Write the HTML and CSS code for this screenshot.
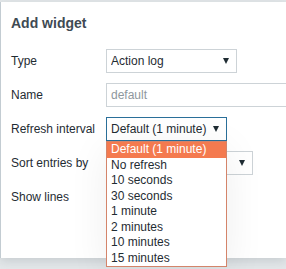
FILE: index.html
```html
<!DOCTYPE html>
<html>
<head>
<meta charset="utf-8">
<link rel="stylesheet" href="styles.css">
</head>
<body>
<div class="dialog">
  <h2 class="title">Add widget</h2>
  <div class="form">
    <div class="row">
      <span class="label">Type</span>
      <div class="select w-type"><span class="value">Action log</span><i class="arrow"></i></div>
    </div>
    <div class="row">
      <span class="label">Name</span>
      <div class="input w-name"><span class="placeholder">default</span></div>
    </div>
    <div class="row">
      <span class="label">Refresh interval</span>
      <div class="select focused w-refresh"><span class="value">Default (1 minute)</span><i class="arrow"></i>
        <ul class="list">
          <li class="opt active">Default (1 minute)</li>
          <li class="opt">No refresh</li>
          <li class="opt">10 seconds</li>
          <li class="opt">30 seconds</li>
          <li class="opt">1 minute</li>
          <li class="opt">2 minutes</li>
          <li class="opt">10 minutes</li>
          <li class="opt">15 minutes</li>
        </ul>
      </div>
    </div>
    <div class="row">
      <span class="label">Sort entries by</span>
      <div class="select w-sort"><span class="value"></span><i class="arrow"></i></div>
    </div>
    <div class="row">
      <span class="label">Show lines</span>
    </div>
  </div>
</div>
</body>
</html>
```
FILE: styles.css
```css
html, body {
  margin: 0;
  padding: 0;
}
body {
  width: 286px;
  height: 269px;
  overflow: hidden;
  background: #e4e8ea;
  font-family: "Liberation Sans", Arial, sans-serif;
  font-size: 12px;
  color: #1f2c33;
}
.dialog {
  margin-top: 2px;
  width: 286px;
  height: 256px;
  background: #ffffff;
  border-left: 1px solid #c3ccd2;
  box-shadow: 0 3px 10px rgba(60, 80, 90, 0.18);
  box-sizing: border-box;
}
.title {
  margin: 0;
  padding: 13px 10px 0 10px;
  font-size: 14px;
  line-height: 16px;
  font-weight: bold;
  color: #3e4a53;
}
.form {
  margin-top: 18px;
  display: flex;
  flex-direction: column;
  gap: 10px;
}
.row {
  display: flex;
  align-items: center;
  height: 24px;
}
.label {
  width: 95px;
  padding-left: 10px;
  flex: none;
  line-height: 14px;
}
.select, .input {
  position: relative;
  box-sizing: border-box;
  height: 24px;
  border: 1px solid #cdd3d7;
  background: #fff;
  display: flex;
  align-items: center;
  padding-left: 4px;
  flex: none;
}
.select .value {
  flex: 1;
  white-space: nowrap;
  overflow: hidden;
}
.arrow {
  flex: none;
  width: 0;
  height: 0;
  border-left: 3px solid transparent;
  border-right: 3px solid transparent;
  border-top: 6px solid #1f2c33;
  margin-right: 7px;
  margin-left: 4px;
}
.w-type { width: 131px; }
.w-name { width: 180px; border-right: none; }
.w-refresh { width: 121px; }
.w-sort { width: 147px; }
.focused {
  border-color: #2a6f99;
}
.placeholder {
  color: #8e979d;
}
.list {
  position: absolute;
  left: -1px;
  top: 23px;
  width: 121px;
  box-sizing: border-box;
  margin: 0;
  padding: 0;
  list-style: none;
  background: #fff;
  border: 1px solid #d4846a;
  z-index: 5;
  box-shadow: 0 8px 40px rgba(0, 0, 0, 0.07);
}
.opt {
  height: 15.5px;
  line-height: 15.5px;
  padding-left: 4px;
  white-space: nowrap;
}
.opt.active {
  background: #f47a4f;
  color: #ffffff;
}
```
